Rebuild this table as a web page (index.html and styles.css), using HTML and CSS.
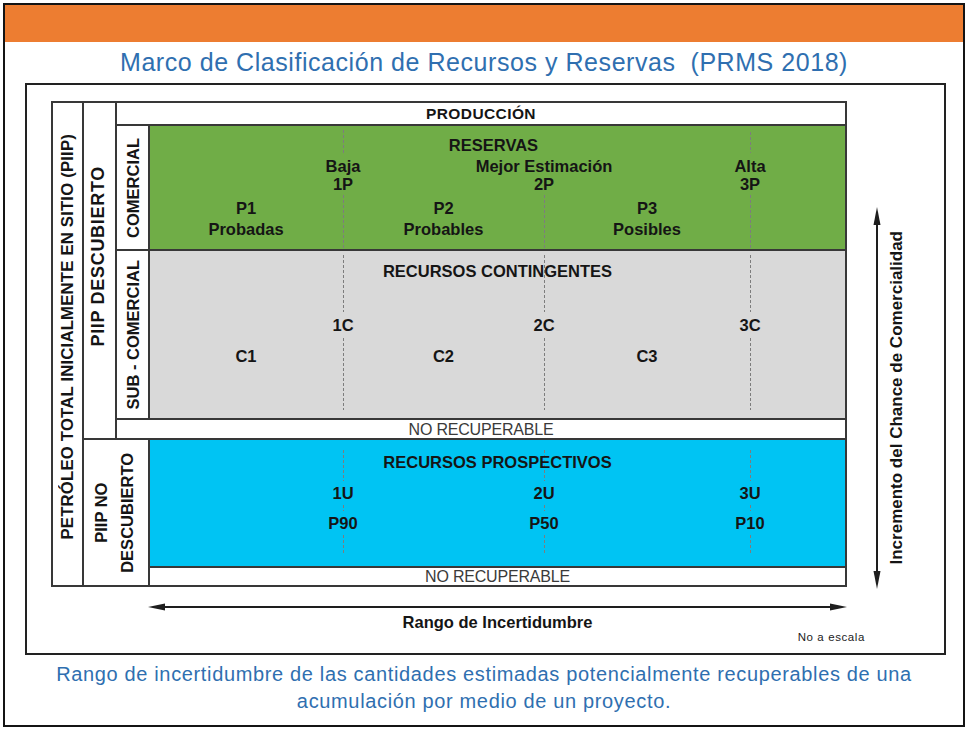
FILE: index.html
```html
<!DOCTYPE html>
<html lang="es">
<head>
<meta charset="utf-8">
<title>Marco de Clasificación de Recursos y Reservas</title>
<link rel="stylesheet" href="styles.css">
</head>
<body>
<div class="slide">
  <div class="topbar"></div>
  <h1 class="title">Marco de Clasificación de Recursos y Reservas&nbsp; (PRMS 2018)</h1>
  <div class="frame">
    <div class="left">
      <div class="matrix">
        <div class="cell c-piip"><span class="vt">PETRÓLEO TOTAL INICIALMENTE EN SITIO (PIIP)</span></div>
        <div class="cell c-desc"><span class="vt">PIIP DESCUBIERTO</span></div>
        <div class="cell c-prod">PRODUCCIÓN</div>
        <div class="cell c-com"><span class="vt">COMERCIAL</span></div>
        <div class="band green">
          <i class="ln l1 r-top"></i><i class="ln l1 r-bot"></i>
          <i class="ln l2 r-bot"></i>
          <i class="ln l3 r-top3"></i><i class="ln l3 r-bot"></i>
          <div class="head">RESERVAS</div>
          <div class="mk m1 ra">Baja</div><div class="mk m1 rb">1P</div>
          <div class="mk m2 ra">Mejor Estimación</div><div class="mk m2 rb">2P</div>
          <div class="mk m3 ra">Alta</div><div class="mk m3 rb">3P</div>
          <div class="zn z1 rc">P1</div><div class="zn z1 rd">Probadas</div>
          <div class="zn z2 rc">P2</div><div class="zn z2 rd">Probables</div>
          <div class="zn z3 rc">P3</div><div class="zn z3 rd">Posibles</div>
        </div>
        <div class="cell c-sub"><span class="vt">SUB - COMERCIAL</span></div>
        <div class="band gray">
          <i class="ln l1 r-top"></i><i class="ln l1 r-bot"></i>
          <i class="ln l2 r-top"></i><i class="ln l2 r-bot"></i>
          <i class="ln l3 r-top"></i><i class="ln l3 r-bot"></i>
          <div class="head">RECURSOS CONTINGENTES</div>
          <div class="mk m1 ra">1C</div>
          <div class="mk m2 ra">2C</div>
          <div class="mk m3 ra">3C</div>
          <div class="zn z1 rc">C1</div>
          <div class="zn z2 rc">C2</div>
          <div class="zn z3 rc">C3</div>
        </div>
        <div class="cell c-norec1">NO RECUPERABLE</div>
        <div class="cell c-nodesc"><span class="vt vt2">PIIP NO<br>DESCUBIERTO</span></div>
        <div class="band blue">
          <i class="ln l1 r-top"></i><i class="ln l1 r-mid"></i><i class="ln l1 r-bot"></i>
          <i class="ln l2 r-top"></i><i class="ln l2 r-mid"></i><i class="ln l2 r-bot"></i>
          <i class="ln l3 r-top"></i><i class="ln l3 r-mid"></i><i class="ln l3 r-bot"></i>
          <div class="head">RECURSOS PROSPECTIVOS</div>
          <div class="mk m1 ra">1U</div><div class="mk m1 rc">P90</div>
          <div class="mk m2 ra">2U</div><div class="mk m2 rc">P50</div>
          <div class="mk m3 ra">3U</div><div class="mk m3 rc">P10</div>
        </div>
        <div class="cell c-norec2">NO RECUPERABLE</div>
      </div>
      <div class="hscale">
        <svg class="harrow" width="699" height="12" viewBox="0 0 699 12">
          <line x1="10" y1="6" x2="689" y2="6" stroke="#1e1e1e" stroke-width="2"/>
          <polygon points="0,6 17,2.5 17,9.5" fill="#1e1e1e"/>
          <polygon points="699,6 682,2.5 682,9.5" fill="#1e1e1e"/>
        </svg>
        <div class="hlabel">Rango de Incertidumbre</div>
        <div class="noscale">No a escala</div>
      </div>
    </div>
    <div class="right">
      <svg class="varrow" width="12" height="382" viewBox="0 0 12 382">
        <line x1="6" y1="10" x2="6" y2="372" stroke="#1e1e1e" stroke-width="2"/>
        <polygon points="6,0 2.5,18 9.5,18" fill="#1e1e1e"/>
        <polygon points="6,382 2.5,364 9.5,364" fill="#1e1e1e"/>
      </svg>
      <div class="vlabel">Incremento del Chance de Comercialidad</div>
    </div>
  </div>
  <p class="caption">Rango de incertidumbre de las cantidades estimadas potencialmente recuperables de una<br>acumulación por medio de un proyecto.</p>
</div>
</body>
</html>
```

FILE: styles.css
```css
html, body {
  margin: 0;
  padding: 0;
  background: #ffffff;
}
body {
  padding: 3px;
  font-family: "Liberation Sans", Arial, sans-serif;
}
.slide {
  width: 962px;
  height: 724px;
  box-sizing: border-box;
  border: 2px solid #141414;
  background: #fff;
}
.topbar {
  height: 37px;
  background: #ed7d31;
}
.title {
  margin: 0;
  height: 41px;
  line-height: 41px;
  text-align: center;
  font-weight: normal;
  font-size: 25px;
  letter-spacing: 0.55px;
  color: #2f6fb0;
  white-space: nowrap;
}
.frame {
  margin-left: 20px;
  width: 921px;
  height: 572px;
  box-sizing: border-box;
  border: 2px solid #222;
  padding: 16px 0 0 24px;
  display: grid;
  grid-template-columns: 796px 1fr;
}

/* ---------- matrix ---------- */
.matrix {
  width: 796px;
  box-sizing: border-box;
  padding: 2px;
  gap: 2px;
  background: #383838;
  display: grid;
  grid-template-columns: 29px 31px 31px 1fr;
  grid-template-rows: 21px 123px 167px 18px 126px 17px;
  color: #151515;
}
.cell {
  background: #fff;
  display: flex;
  align-items: center;
  justify-content: center;
  font-weight: bold;
  font-size: 16.5px;
}
.vt {
  writing-mode: vertical-rl;
  transform: rotate(180deg);
  white-space: nowrap;
  line-height: 18px;
}
.vt2 {
  text-align: center;
  line-height: 26px;
  margin-left: -4px;
}
.c-piip { grid-column: 1; grid-row: 1 / 7; padding-bottom: 14px; font-size: 16.8px; letter-spacing: 0.15px; }
.c-desc { grid-column: 2; grid-row: 1 / 5; padding-bottom: 29px; padding-right: 3px; font-size: 18px; letter-spacing: 0.7px; }
.c-prod { grid-column: 3 / 5; grid-row: 1; font-size: 15.5px; letter-spacing: 0.4px; line-height: 21px; }
.c-com { grid-column: 3; grid-row: 2; font-size: 16.5px; }
.c-sub { grid-column: 3; grid-row: 3; font-size: 16.5px; }
.c-norec1 { grid-column: 3 / 5; grid-row: 4; }
.c-nodesc { grid-column: 2 / 4; grid-row: 5 / 7; font-size: 16.5px; }
.c-norec2 { grid-column: 4; grid-row: 6; }
.c-norec1, .c-norec2 {
  font-weight: normal;
  font-size: 16px;
  color: #3a3a3a;
  letter-spacing: -0.2px;
  line-height: 17px;
}

/* ---------- bands ---------- */
.band {
  display: grid;
  grid-template-columns: 192px 2px 199px 2px 204px 2px 1fr;
  font-weight: bold;
  font-size: 16.5px;
  line-height: 18px;
  color: #151515;
}
.green { grid-column: 4; grid-row: 2; background: #70ad47;
  grid-template-rows: 10px 18px 3px 18px 18px 6px 18px 3px 18px 11px; }
.gray { grid-column: 4; grid-row: 3; background: #d9d9d9;
  grid-template-rows: 11px 18px 36px 18px 13px 18px 53px; }
.blue { grid-column: 4; grid-row: 5; background: #00c4f3;
  grid-template-rows: 13px 18px 13px 18px 12px 18px 34px; }

.head {
  grid-column: 1 / -1;
  grid-row: 2;
  text-align: center;
  white-space: nowrap;
}
.green .head { padding-right: 8px; }
.mk {
  justify-self: center;
  white-space: nowrap;
  text-align: center;
}
.zn { text-align: center; white-space: nowrap; }
.m1 { grid-column: 2; }
.m2 { grid-column: 4; }
.m3 { grid-column: 6; }
.z1 { grid-column: 1; }
.z2 { grid-column: 3; }
.z3 { grid-column: 5; }

.green .ra { grid-row: 4; }
.green .rb { grid-row: 5; }
.green .rc { grid-row: 7; }
.green .rd { grid-row: 9; }
.gray .ra { grid-row: 4; }
.gray .rc { grid-row: 6; }
.blue .ra { grid-row: 4; }
.blue .rc { grid-row: 6; }

.ln {
  display: block;
  width: 1px;
  justify-self: center;
  background: repeating-linear-gradient(to bottom, #7d7d7d 0 3px, transparent 3px 5px);
}
.l1 { grid-column: 2; }
.l2 { grid-column: 4; }
.l3 { grid-column: 6; }

.green .r-top { grid-row: 1 / 4; margin: 4px 0 4px; }
.green .r-top3 { grid-row: 1 / 4; margin: 6px 0 4px; }
.green .r-bot { grid-row: 6 / 11; margin: 2px 0 0; }
.gray .r-top { grid-row: 1 / 4; margin: 4px 0 4px; }
.gray .r-bot { grid-row: 5 / 8; margin: 4px 0 8px; }
.blue .r-top { grid-row: 1 / 4; margin: 10px 0 3px; }
.blue .r-mid { grid-row: 5; margin: 3px 0; }
.blue .r-bot { grid-row: 7; margin: 3px 0 11px; }

/* ---------- scales ---------- */
.hscale {
  margin-left: 97px;
  width: 699px;
}
.harrow {
  display: block;
  margin-top: 14px;
}
.hlabel {
  text-align: center;
  font-weight: bold;
  font-size: 16.5px;
  line-height: 18px;
  color: #151515;
}
.noscale {
  text-align: right;
  margin-right: -18px;
  font-size: 11.5px;
  letter-spacing: 0.6px;
  line-height: 12px;
  color: #222;
}
.right {
  align-self: start;
  margin-top: 106px;
  margin-left: 24px;
  height: 382px;
  display: flex;
  align-items: center;
  gap: 5px;
}
.varrow { display: block; }
.vlabel {
  writing-mode: vertical-rl;
  transform: rotate(180deg);
  white-space: nowrap;
  font-weight: bold;
  font-size: 17px;
  line-height: 18px;
  color: #151515;
}

/* ---------- caption ---------- */
.caption {
  margin: 6px 0 0;
  text-align: center;
  font-size: 20px;
  letter-spacing: 0.65px;
  line-height: 27px;
  color: #2f6fb0;
}
```
